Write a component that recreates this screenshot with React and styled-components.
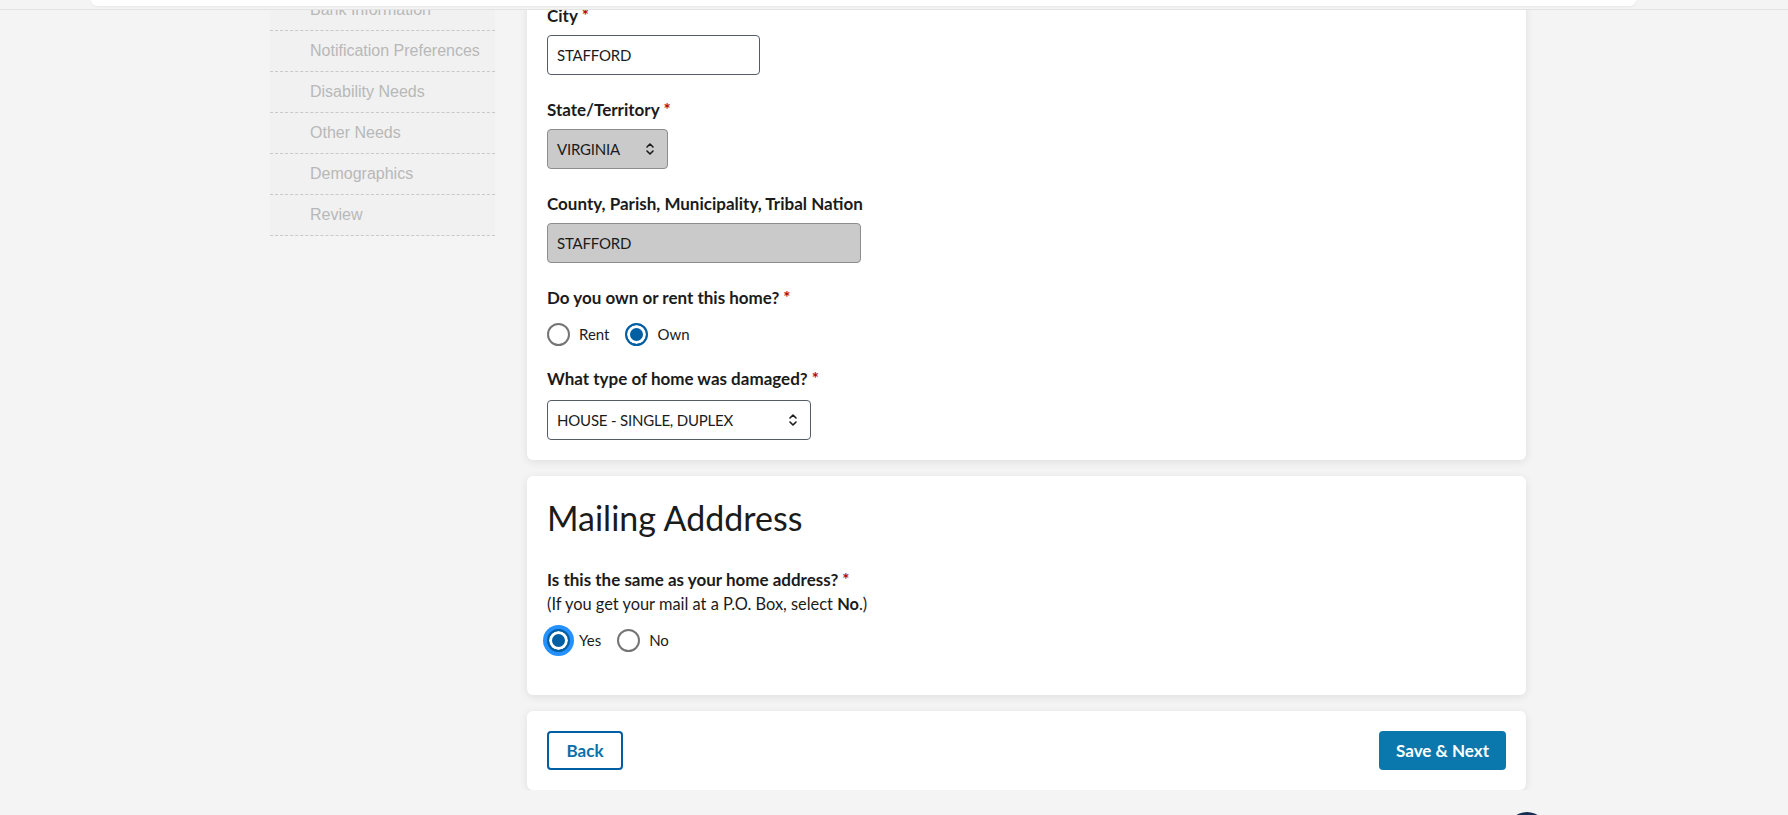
import styled, { createGlobalStyle } from "styled-components";

const GlobalStyle = createGlobalStyle`
  html, body {
    margin: 0;
    padding: 0;
    background: #f4f4f4;
    font-family: Lato, "Noto Sans", sans-serif;
    color: #1b1b1b;
    overflow: hidden;
  }
  * {
    box-sizing: border-box;
  }
`;

const Header = styled.div`
  position: fixed;
  top: 0;
  left: 0;
  right: 0;
  height: 10px;
  background: #f4f4f4;
  border-bottom: 1px solid #e2e2e2;
  z-index: 10;
`;

const HeaderCard = styled.div`
  margin-left: 91px;
  width: 1545px;
  height: 6px;
  background: #fff;
  border-radius: 0 0 10px 10px;
  box-shadow: 0 1px 2px rgba(0, 0, 0, 0.06);
`;

const Page = styled.div`
  display: flex;
  align-items: flex-start;
  gap: 32px;
  margin: -10px 0 0 270px;
`;

const Sidebar = styled.ul`
  list-style: none;
  margin: 0;
  padding: 0;
  width: 225px;
  background: #f1f1f1;
`;

const NavItem = styled.li`
  height: 41px;
  display: flex;
  align-items: center;
  padding-left: 40px;
  border-bottom: 1px dashed #c9c9c9;
  font-family: "Liberation Sans", Arial, sans-serif;
  font-size: 16px;
  color: #b8b8b8;
`;

const Main = styled.div`
  width: 999px;
  display: flex;
  flex-direction: column;
  gap: 16px;
`;

const Card = styled.section`
  background: #fff;
  border-radius: 6px;
  box-shadow: 0 2px 8px rgba(0, 0, 0, 0.09);
  padding: ${(p) => p.$pad || "20px"};
`;

const Label = styled.div`
  font-size: 17px;
  font-weight: 700;
  line-height: 22px;
  margin-top: ${(p) => p.$top || "0px"};
  margin-bottom: ${(p) => p.$bottom || "8px"};
`;

const Req = styled.span`
  color: #b50909;
  margin-left: 4px;
`;

const Input = styled.div`
  width: ${(p) => p.$w}px;
  height: 40px;
  border: 1px solid ${(p) => (p.$disabled ? "#8d8d8d" : "#565c65")};
  border-radius: 4px;
  background: ${(p) => (p.$disabled ? "#cacaca" : "#fff")};
  display: flex;
  align-items: center;
  justify-content: space-between;
  padding: 0 12px 0 9px;
  font-size: 15px;
  letter-spacing: -0.2px;
  color: #1b1b1b;
`;

const Chevron = () => (
  <svg width="10" height="16" viewBox="0 0 10 16" fill="none">
    <path d="M2 6 L5 3 L8 6" stroke="#1b1b1b" strokeWidth="1.6" strokeLinecap="round" strokeLinejoin="round" />
    <path d="M2 10 L5 13 L8 10" stroke="#1b1b1b" strokeWidth="1.6" strokeLinecap="round" strokeLinejoin="round" />
  </svg>
);

const RadioRow = styled.div`
  display: flex;
  align-items: center;
  height: 34px;
  gap: 16px;
  margin-top: ${(p) => p.$top || "0px"};
`;

const RadioOption = styled.label`
  display: flex;
  align-items: center;
  gap: 9px;
  font-size: 15px;
  color: #1b1b1b;
`;

const RadioDot = styled.span`
  width: 23px;
  height: 23px;
  border-radius: 50%;
  flex: none;
  border: 2px solid ${(p) => (p.$checked ? "#005ea2" : "#757575")};
  background: ${(p) => (p.$checked ? "#005ea2" : "#fff")};
  box-shadow: ${(p) =>
    p.$checked
      ? p.$focus
        ? "inset 0 0 0 3px #fff, 0 0 0 4px #2491ff"
        : "inset 0 0 0 3px #fff"
      : "none"};
`;

const Heading = styled.h2`
  margin: 2px 0 31px;
  font-size: 34px;
  font-weight: 400;
  line-height: 40px;
  color: #1b1b1b;
`;

const Hint = styled.div`
  font-size: 16.4px;
  line-height: 22px;
  margin-top: -6px;
  b {
    font-weight: 700;
  }
`;

const Actions = styled.div`
  display: flex;
  justify-content: space-between;
  align-items: center;
`;

const Button = styled.button`
  height: 39px;
  padding: 0 ${(p) => p.$px || "16px"};
  border-radius: 4px;
  font-family: Lato, "Noto Sans", sans-serif;
  font-size: 17px;
  font-weight: 700;
  cursor: pointer;
  border: 2px solid #005ea2;
  background: ${(p) => (p.$primary ? "#0a78ad" : "#fff")};
  border-color: ${(p) => (p.$primary ? "#0a78ad" : "#005ea2")};
  color: ${(p) => (p.$primary ? "#fff" : "#0b6fa8")};
`;

const ChatBubble = styled.div`
  position: fixed;
  left: 1507px;
  top: 812px;
  width: 40px;
  height: 40px;
  border-radius: 50%;
  background: #162e51;
`;

const navItems = [
  "Bank Information",
  "Notification Preferences",
  "Disability Needs",
  "Other Needs",
  "Demographics",
  "Review",
];

const App = () => {
  return (
    <>
      <GlobalStyle />
      <Header>
        <HeaderCard />
      </Header>
      <Page>
        <Sidebar>
          {navItems.map((item) => (
            <NavItem key={item}>{item}</NavItem>
          ))}
        </Sidebar>
        <Main>
          <Card $pad="15px 20px 20px">
            <Label>
              City<Req>*</Req>
            </Label>
            <Input $w={213}>STAFFORD</Input>

            <Label $top="24px">
              State/Territory<Req>*</Req>
            </Label>
            <Input $w={121} $disabled>
              VIRGINIA
              <Chevron />
            </Input>

            <Label $top="24px">County, Parish, Municipality, Tribal Nation</Label>
            <Input $w={314} $disabled>
              STAFFORD
            </Input>

            <Label $top="24px">
              Do you own or rent this home?<Req>*</Req>
            </Label>
            <RadioRow>
              <RadioOption>
                <RadioDot />
                Rent
              </RadioOption>
              <RadioOption>
                <RadioDot $checked />
                Own
              </RadioOption>
            </RadioRow>

            <Label $top="17px" $bottom="10px">
              What type of home was damaged?<Req>*</Req>
            </Label>
            <Input $w={264}>
              HOUSE - SINGLE, DUPLEX
              <Chevron />
            </Input>
          </Card>

          <Card $pad="20px 20px 38px">
            <Heading>Mailing Adddress</Heading>
            <Label>
              Is this the same as your home address?<Req>*</Req>
            </Label>
            <Hint>
              (If you get your mail at a P.O. Box, select <b>No</b>.)
            </Hint>
            <RadioRow $top="8px">
              <RadioOption>
                <RadioDot $checked $focus />
                Yes
              </RadioOption>
              <RadioOption>
                <RadioDot />
                No
              </RadioOption>
            </RadioRow>
          </Card>

          <Card $pad="20px 20px 20px">
            <Actions>
              <Button $px="17.5px">Back</Button>
              <Button $primary $px="15px">Save &amp; Next</Button>
            </Actions>
          </Card>
        </Main>
      </Page>
      <ChatBubble />
    </>
  );
};

export default App;
